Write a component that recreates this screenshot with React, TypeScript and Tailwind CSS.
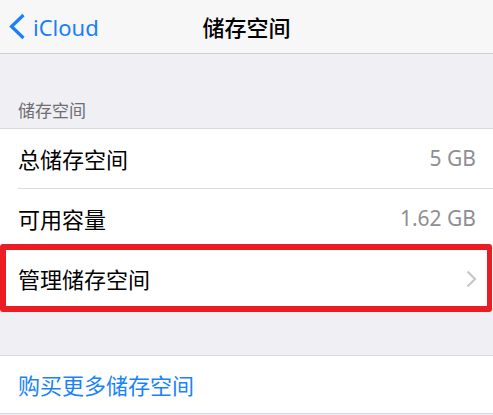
const font = { fontFamily: '"Noto Sans", "Noto Sans CJK SC", sans-serif' }

function Chevron() {
  return (
    <svg viewBox="0 0 11 18" className="w-[11px] h-[18px]" fill="none" stroke="#c7c7cc" strokeWidth={2.2}>
      <path d="M1.5 1.5 9 9l-7.5 7.5" />
    </svg>
  )
}

export default function App() {
  return (
    <div style={font} className="w-[493px] h-[415px] overflow-hidden bg-[#efeff4] text-black">
      {/* Nav bar */}
      <div className="relative h-[54px] bg-[#f7f7f8] border-b border-[#cfcfd3] flex items-center">
        <div className="flex items-center pl-[8px] text-[#1a7ffb]">
          <svg viewBox="0 0 18 27" className="w-[18px] h-[27px]" fill="none" stroke="currentColor" strokeWidth={3.2}>
            <path d="M15.5 2 3.5 13.5 15.5 25" />
          </svg>
          <span className="ml-[7px] text-[22px] leading-none">iCloud</span>
        </div>
        <div className="absolute inset-0 flex items-center justify-center text-[22px] font-medium leading-none">
          储存空间
        </div>
      </div>

      {/* Section header */}
      <div className="h-[74px] flex items-end pl-[18px] pb-[9px] text-[17px] leading-none text-[#6d6d72]">
        储存空间
      </div>

      {/* Storage group */}
      <div className="bg-white border-y border-[#d9d9dd]">
        <div className="h-[59px] flex items-center justify-between pl-[18px] pr-[17px]">
          <span className="text-[22px] leading-none">总储存空间</span>
          <span className="text-[21px] leading-none text-[#8e8e93]">5 GB</span>
        </div>
        <div className="ml-[18px] h-px bg-[#dcdce0]" />
        <div className="h-[59px] flex items-center justify-between pl-[18px] pr-[17px]">
          <span className="text-[22px] leading-none">可用容量</span>
          <span className="text-[21px] leading-none text-[#8e8e93]">1.62 GB</span>
        </div>
        <div className="ml-[18px] h-px bg-[#dcdce0]" />
        <div className="relative h-[59px] flex items-center justify-between pl-[18px] pr-[16px]">
          <span className="text-[22px] leading-none">管理储存空间</span>
          <Chevron />
          <div className="absolute left-0 right-[1px] top-[-5px] bottom-[-4px] border-[6px] border-r-[5px] border-[#ec1c24] rounded-[3px]" />
        </div>
      </div>

      <div className="h-[46px]" />

      {/* Buy more */}
      <div className="bg-white border-y border-[#d9d9dd]">
        <div className="h-[57px] flex items-center pl-[18px]">
          <span className="text-[22px] leading-none text-[#1a82fb]">购买更多储存空间</span>
        </div>
      </div>
    </div>
  )
}
